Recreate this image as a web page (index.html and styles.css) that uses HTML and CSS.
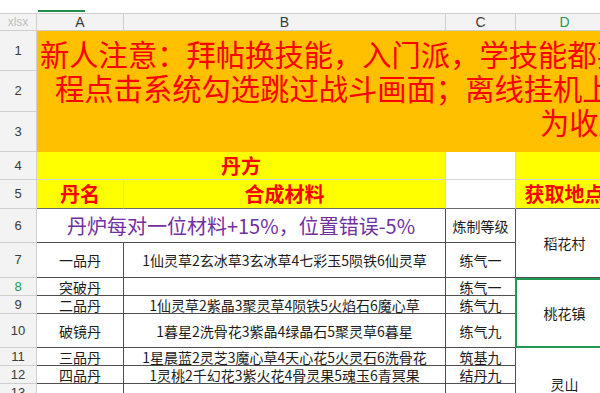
FILE: index.html
```html
<!DOCTYPE html>
<html lang="zh-CN">
<head>
<meta charset="utf-8">
<title>丹方</title>
<link rel="stylesheet" href="styles.css">
</head>
<body>
<div class="tabbar"><div class="tab-mark"></div></div>
<div class="sheet">
  <div class="hd corner">xlsx</div>
  <div class="hd">A</div>
  <div class="hd">B</div>
  <div class="hd">C</div>
  <div class="hd active">D</div>

  <div class="hd rn">1</div>
  <div class="banner">
    <div class="line line-1">新人注意：拜帖换技能，入门派，学技能都要去对应</div>
    <div class="line line-2">程点击系统勾选跳过战斗画面；离线挂机上线</div>
    <div class="line line-3">为收益</div>
  </div>
  <div class="hd rn">2</div>
  <div class="hd rn">3</div>

  <div class="hd rn">4</div>
  <div class="cell light yellow span-2">丹方</div>
  <div class="cell light"></div>
  <div class="cell light yellow"></div>

  <div class="hd rn">5</div>
  <div class="cell light yellow dark-bottom">丹名</div>
  <div class="cell light yellow dark-bottom">合成材料</div>
  <div class="cell light dark-bottom"></div>
  <div class="cell light yellow dark-bottom">获取地点</div>

  <div class="hd rn">6</div>
  <div class="cell note span-2">丹炉每对一位材料+15%，位置错误-5%</div>
  <div class="cell">炼制等级</div>
  <div class="cell rows-2">稻花村</div>

  <div class="hd rn">7</div>
  <div class="cell">一品丹</div>
  <div class="cell">1仙灵草2玄冰草3玄冰草4七彩玉5陨铁6仙灵草</div>
  <div class="cell">练气一</div>

  <div class="hd rn active">8</div>
  <div class="cell">突破丹</div>
  <div class="cell"></div>
  <div class="cell">练气一</div>
  <div class="cell rows-3 selected">桃花镇</div>

  <div class="hd rn">9</div>
  <div class="cell">二品丹</div>
  <div class="cell">1仙灵草2紫晶3聚灵草4陨铁5火焰石6魔心草</div>
  <div class="cell">练气九</div>

  <div class="hd rn">10</div>
  <div class="cell">破镜丹</div>
  <div class="cell">1暮星2洗骨花3紫晶4绿晶石5聚灵草6暮星</div>
  <div class="cell">练气九</div>

  <div class="hd rn">11</div>
  <div class="cell">三品丹</div>
  <div class="cell">1星晨蓝2灵芝3魔心草4天心花5火灵石6洗骨花</div>
  <div class="cell">筑基九</div>
  <div class="cell rows-4">灵山</div>

  <div class="hd rn">12</div>
  <div class="cell">四品丹</div>
  <div class="cell">1灵桃2千幻花3紫火花4骨灵果5魂玉6青冥果</div>
  <div class="cell">结丹九</div>

  <div class="hd rn">13</div>
  <div class="cell"></div>
  <div class="cell"></div>
  <div class="cell"></div>
</div>
</body>
</html>
```

FILE: styles.css
```css
* {
  box-sizing: border-box;
}

html,
body {
  margin: 0;
}

body {
  width: 600px;
  height: 393px;
  overflow: hidden;
  background: #ffffff;
  color: #1c1c1c;
  font-family: "Noto Sans CJK SC", "Noto Sans", sans-serif;
}

/* strip above the sheet with the active-sheet marker */
.tabbar {
  height: 13px;
  padding-top: 10px;
  padding-left: 38px;
}

.tab-mark {
  width: 47px;
  height: 2px;
  background: #1f8f4e;
}

/* spreadsheet grid: row-header column + columns A–D */
.sheet {
  display: grid;
  grid-template-columns: 37px 87px 322px 70px 98px;
  grid-template-rows: 17px 40px 41px 40px 28px 29px 34px 35px 18px 18px 34px 18px 18px 18px;
  grid-auto-rows: 18px;
  width: 614px;
  border-top: 1px solid #cdcdcd;
}

/* column / row headers */
.hd {
  display: flex;
  align-items: center;
  justify-content: center;
  background: #f3f3f3;
  border-right: 1px solid #cfcfcf;
  border-bottom: 1px solid #cfcfcf;
  color: #3a3a3a;
  font-family: "Liberation Sans", Arial, sans-serif;
  font-size: 14px;
  line-height: 16px;
}

.hd.rn {
  font-size: 13px;
}

.hd.corner {
  color: #bdbdbd;
  font-size: 12px;
}

.hd.active {
  color: #1f9a50;
}

/* data cells */
.cell {
  display: flex;
  align-items: center;
  justify-content: center;
  border-right: 1px solid #4f4f4f;
  border-bottom: 1px solid #4f4f4f;
  font-size: 14px;
  line-height: 16px;
  white-space: nowrap;
  overflow: hidden;
}

.cell.light {
  border-right-color: #d6d6d6;
  border-bottom-color: #d6d6d6;
}

.cell.dark-bottom {
  border-bottom-color: #6a6a6a;
}

.yellow {
  background: #ffff00;
  color: #ff0000;
  font-size: 20px;
  line-height: 22px;
  font-weight: 700;
}

.note {
  color: #7030a0;
  font-size: 20px;
  line-height: 22px;
}

.span-2 {
  grid-column: span 2;
}

.rows-2 {
  grid-row: span 2;
}

.rows-3 {
  grid-row: span 3;
}

.rows-4 {
  grid-row: span 4;
}

/* merged notice block over rows 1–3 */
.banner {
  grid-column: span 4;
  grid-row: span 3;
  background: #ffc000;
  color: #ff0000;
  font-size: 29.3px;
  line-height: 34px;
  padding-top: 5px;
  white-space: nowrap;
  overflow: hidden;
}

.line-1 {
  padding-left: 3px;
}

.line-2 {
  padding-left: 18px;
}

.line-3 {
  padding-left: 503px;
}

/* current selection frame */
.selected {
  position: relative;
  overflow: visible;
}

.selected::after {
  content: "";
  position: absolute;
  top: 0;
  right: 0;
  bottom: -1px;
  left: -1px;
  border: 2px solid #1f9a50;
}
```
